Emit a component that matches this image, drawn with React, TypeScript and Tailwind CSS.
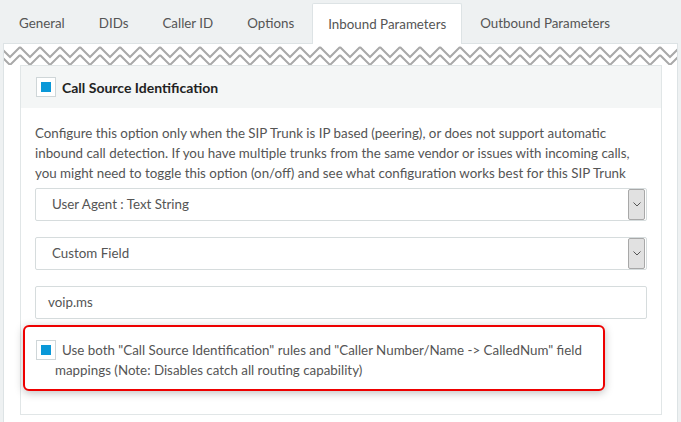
import React from "react";

const tabs = [
  "General",
  "DIDs",
  "Caller ID",
  "Options",
  "Inbound Parameters",
  "Outbound Parameters",
];

function Check() {
  return (
    <span className="inline-flex h-[20px] w-[20px] shrink-0 items-center justify-center border border-[#cfd6d8] bg-white align-top">
      <span className="h-[10px] w-[10px] bg-[#0a98d8]" />
    </span>
  );
}

function Zigzag() {
  return (
    <svg className="block h-[21px] w-full" aria-hidden="true">
      <defs>
        <pattern id="zz" x="16" y="0" width="20" height="21" patternUnits="userSpaceOnUse">
          <polyline points="0,3 10,13 20,3" fill="none" stroke="#a9a9a9" strokeWidth="2" />
          <polyline points="0,11 10,21 20,11" fill="none" stroke="#a9a9a9" strokeWidth="2" />
        </pattern>
      </defs>
      <rect width="100%" height="21" fill="url(#zz)" />
    </svg>
  );
}

function SelectBox({ label }: { label: string }) {
  return (
    <div className="flex h-[33px] items-center justify-between rounded-[2px] border border-[#d6dcdd] bg-white pl-[16px] pr-[1px]">
      <span>{label}</span>
      <span className="flex h-[31px] w-[17px] items-center justify-center rounded-[2px] border border-[#a8a8a8] bg-[#e1e1e1]">
        <svg width="8" height="5" viewBox="0 0 8 5">
          <polyline points="0.5,0.5 4,4 7.5,0.5" fill="none" stroke="#555" strokeWidth="1" />
        </svg>
      </span>
    </div>
  );
}

export default function App() {
  return (
    <div className="h-[422px] w-[681px] overflow-hidden whitespace-nowrap bg-[#eef1f2] text-[13.35px] text-[#555] [font-family:Lato,sans-serif]">
      <div className="flex h-[43px] pl-[3px] pt-[3px]">
        {tabs.map((t) => (
          <div
            key={t}
            className={
              t === "Inbound Parameters"
                ? "relative z-10 -mb-px mr-[2px] flex items-center rounded-t-[2px] border border-b-0 border-[#dde3e5] bg-white px-[15px]"
                : "mr-[2px] flex items-center border border-transparent px-[15px]"
            }
          >
            {t}
          </div>
        ))}
      </div>

      <div className="ml-[3px] h-[400px] w-[675px] border border-[#dde3e5] bg-white">
        <Zigzag />
        <div className="ml-[16px] mr-[15px] border border-[#e1e6e7]">
          <div className="flex h-[42px] items-center gap-[6px] bg-[#f4f6f6] pl-[15px]">
            <Check />
            <span className="text-[14px] font-bold text-[#222]">Call Source Identification</span>
          </div>
          <div className="px-[14px] pb-[23px] pt-[15px]">
            <p className="leading-[20px]">
              Configure this option only when the SIP Trunk is IP based (peering), or does not support automatic
              <br />
              inbound call detection. If you have multiple trunks from the same vendor or issues with incoming calls,
              <br />
              you might need to toggle this option (on/off) and see what configuration works best for this SIP Trunk
            </p>
            <div className="mt-[5px]">
              <SelectBox label="User Agent : Text String" />
            </div>
            <div className="mt-[16px]">
              <SelectBox label="Custom Field" />
            </div>
            <div className="mt-[16px] flex h-[33px] items-center rounded-[2px] border border-[#d6dcdd] bg-white pl-[12px]">
              voip.ms
            </div>
            <div className="-ml-[12px] mt-[6px] w-[582px] rounded-[6px] border-2 border-[#ee0000] bg-white pb-[9px] pl-[30px] pt-[13px] shadow-[0_2px_8px_rgba(0,0,0,0.25)]">
              <p className="leading-[20px]">
                <span className="-ml-[19px] mr-[6px] inline-block align-top">
                  <Check />
                </span>
                Use both "Call Source Identification" rules and "Caller Number/Name -&gt; CalledNum" field
                <br />
                mappings (Note: Disables catch all routing capability)
              </p>
            </div>
          </div>
        </div>
      </div>
    </div>
  );
}
